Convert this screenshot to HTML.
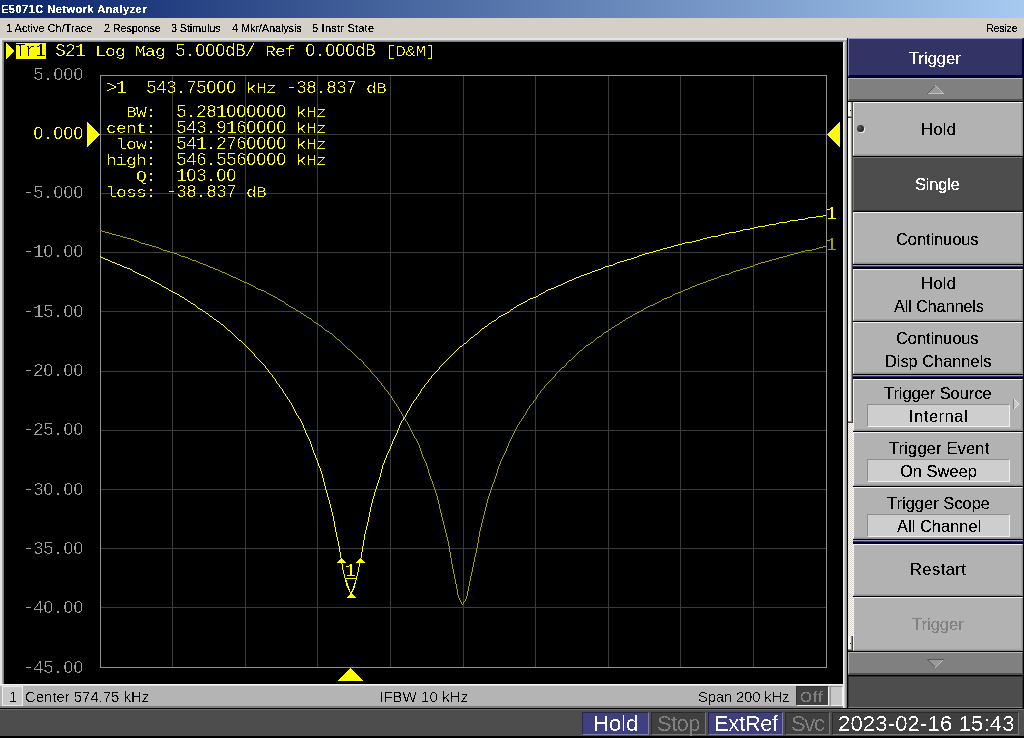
<!DOCTYPE html>
<html lang="en"><head><meta charset="utf-8"><title>E5071C Network Analyzer</title>
<style>
*{box-sizing:border-box;margin:0;padding:0}
html,body{width:1024px;height:738px;overflow:hidden;background:#d4d0c8}
body{position:relative;font-family:"Liberation Sans",sans-serif;font-size:11px;color:#000}
div,span,i,b{position:absolute;display:block;font-style:normal;font-weight:normal}
.u{line-height:28px;white-space:pre;filter:url(#cu)}
.u.s{filter:url(#cs)}
#title{left:0;top:0;width:1024px;height:18px;background:linear-gradient(90deg,#0a246a 0%,#a6caf0 100%)}
#menu{left:0;top:18px;width:1024px;height:20px;background:#d4d0c8}
#frame{left:0;top:38px;width:848px;height:671px;background:#000}
#plot{left:4px;top:42px;width:839px;height:642px;background:#000;overflow:hidden}
.tx{white-space:pre;font-family:"Liberation Mono",monospace;font-size:18px;letter-spacing:-0.8px;line-height:20px;color:#ff0;filter:url(#cm)}
.tx .a{position:static;display:inline-block;transform:scaleY(0.84);transform-origin:0 15px}
.z{width:4px;height:4px;background:#000}
.p{width:2px;height:2px}
#chbar{left:0;top:684px;width:843px;height:24px;background:#b4b4b4}
#status{left:0;top:708px;width:1024px;height:30px;background:#4d4d4d}
#panel{left:848px;top:38px;width:176px;height:670px;background:#000}
.k{background:#b2b2b2;border:1px solid;border-color:#f4f4f4 #8c8c8c #8c8c8c #f4f4f4;box-shadow:inset -1px -1px 0 #a0a0a0}
.k.dk{background:#4d4d4d;border-color:#7a7a7a #303030 #303030 #7a7a7a;box-shadow:none}
.th{left:0;width:5px;background:linear-gradient(90deg,#fff 0,#fff 2px,#ece9d8 2px,#ece9d8 3px);border-right:1px solid #404040;border-bottom:1px solid #404040;box-shadow:inset -1px -1px 0 #909090}
.ck{left:0;width:5px;background-color:#fff;background-image:linear-gradient(45deg,#d4d0c8 25%,transparent 25%,transparent 75%,#d4d0c8 75%),linear-gradient(45deg,#d4d0c8 25%,transparent 25%,transparent 75%,#d4d0c8 75%);background-size:2px 2px;background-position:0 0,1px 1px}
.sep{background:#333366;border-top:1px solid #9999cc;border-bottom:1px solid #000033}
.vb{width:143px;height:23px;background:#cecece;border:1px solid;border-color:#8c8c8c #f0f0f0 #f0f0f0 #8c8c8c}
.dot{width:7px;height:7px;border-radius:50%;background:radial-gradient(circle at 35% 35%,#5a5a5a,#1c1c1c 80%);box-shadow:1px 1px 0 #f0f0f0}
.arr{width:0;height:0;border-left:6px solid #d8d8d8;border-top:6px solid transparent;border-bottom:6px solid transparent}
.sb{top:4px;height:23px;border:1px solid}
.sb.on{background:#404080;border-color:#26264d #8080a8 #8080a8 #26264d}
.sb.off{background:#404040;border-color:#2a2a2a #787878 #787878 #2a2a2a}
</style></head><body>
<svg width="0" height="0" style="position:absolute"><defs>
<filter id="cm" x="-5%" y="-20%" width="110%" height="140%" color-interpolation-filters="sRGB"><feComponentTransfer><feFuncA type="discrete" tableValues="0 0 0 0 0 0 0 1 1 1"/></feComponentTransfer></filter>
<filter id="cu" x="-5%" y="-20%" width="110%" height="140%" color-interpolation-filters="sRGB"><feComponentTransfer><feFuncA type="discrete" tableValues="0 0 1 1 1"/></feComponentTransfer></filter>
<filter id="cs" x="-5%" y="-20%" width="110%" height="140%" color-interpolation-filters="sRGB"><feComponentTransfer><feFuncA type="discrete" tableValues="0 0 0 1 1"/></feComponentTransfer></filter>
</defs></svg>

<div id="title"><span class="u" style="left:1px;top:-5px;font-size:11px;letter-spacing:0.491px;font-weight:bold;color:#fff;">E5071C Network Analyzer</span></div>
<div id="menu"><span class="u" style="left:6px;top:-4px;font-size:11px;letter-spacing:0px;">1 Active Ch/Trace</span><span class="u" style="left:104px;top:-4px;font-size:11px;letter-spacing:-0.2px;">2 Response</span><span class="u" style="left:171px;top:-4px;font-size:11px;letter-spacing:-0.2px;">3 Stimulus</span><span class="u" style="left:232px;top:-4px;font-size:11px;letter-spacing:-0.138px;">4 Mkr/Analysis</span><span class="u" style="left:312px;top:-4px;font-size:11px;letter-spacing:0.225px;">5 Instr State</span><span class="u" style="left:986px;top:-4px;font-size:11px;letter-spacing:-0.36px;">Resize</span></div>
<div id="frame">
 <div style="left:0;top:0;width:848px;height:2px;background:#e4e4e4"></div>
 <div style="left:0;top:0;width:2px;height:671px;background:#e4e4e4"></div>
 <div style="left:2px;top:2px;width:845px;height:1px;background:#a0a0a0"></div>
 <div style="left:2px;top:2px;width:1px;height:668px;background:#a0a0a0"></div>
 <div style="left:3px;top:3px;width:844px;height:1px;background:#808080"></div>
 <div style="left:3px;top:3px;width:1px;height:667px;background:#808080"></div>
 <div style="left:843px;top:4px;width:1px;height:666px;background:#f4f4f4"></div>
 <div style="left:844px;top:3px;width:1px;height:667px;background:#d0d0d0"></div>
 <div style="left:845px;top:2px;width:1px;height:668px;background:#a8a8a8"></div>
 <div style="left:846px;top:2px;width:1px;height:668px;background:#888"></div>
 <div style="left:847px;top:0;width:1px;height:671px;background:#000"></div>
</div>
<div id="plot">
<svg width="839" height="642" viewBox="4 42 839 642" style="position:absolute;left:0;top:0" shape-rendering="crispEdges">
 <g fill="#3c3c3c"><rect x="172" y="75" width="1" height="593"/><rect x="245" y="75" width="1" height="593"/><rect x="317" y="75" width="1" height="593"/><rect x="390" y="75" width="1" height="593"/><rect x="463" y="75" width="1" height="593"/><rect x="535" y="75" width="1" height="593"/><rect x="608" y="75" width="1" height="593"/><rect x="680" y="75" width="1" height="593"/><rect x="753" y="75" width="1" height="593"/><rect x="100" y="134" width="727" height="1"/><rect x="100" y="193" width="727" height="1"/><rect x="100" y="252" width="727" height="1"/><rect x="100" y="311" width="727" height="1"/><rect x="100" y="371" width="727" height="1"/><rect x="100" y="430" width="727" height="1"/><rect x="100" y="489" width="727" height="1"/><rect x="100" y="548" width="727" height="1"/><rect x="100" y="607" width="727" height="1"/></g>
 <rect x="100.5" y="75.5" width="726" height="592" fill="none" stroke="#909090" stroke-width="1"/>
 <path d="M363 362h1v2h-1zM370 370h1v2h-1zM377 378h1v2h-1zM381 383h1v2h-1zM384 387h1v2h-1zM388 392h1v2h-1zM391 396h1v2h-1zM392 398h1v2h-1zM394 401h1v2h-1zM396 404h1v2h-1zM398 407h1v2h-1zM399 409h1v2h-1zM401 412h1v2h-1zM402 414h1v2h-1zM403 416h1v2h-1zM405 419h1v2h-1zM407 422h1v2h-1zM408 424h1v2h-1zM409 426h1v2h-1zM410 428h1v2h-1zM411 430h1v2h-1zM412 432h1v2h-1zM413 434h1v2h-1zM414 436h1v2h-1zM416 439h1v2h-1zM417 441h1v2h-1zM418 443h1v2h-1zM419 445h1v3h-1zM420 448h1v3h-1zM421 451h1v3h-1zM422 454h1v3h-1zM423 457h1v2h-1zM424 459h1v2h-1zM425 461h1v2h-1zM426 463h1v3h-1zM427 466h1v3h-1zM428 469h1v4h-1zM429 473h1v3h-1zM430 476h1v3h-1zM431 479h1v2h-1zM432 481h1v3h-1zM433 484h1v3h-1zM434 487h1v3h-1zM435 490h1v3h-1zM436 493h1v3h-1zM437 496h1v4h-1zM438 500h1v4h-1zM439 504h1v5h-1zM440 509h1v4h-1zM441 513h1v4h-1zM442 517h1v4h-1zM443 521h1v4h-1zM444 525h1v4h-1zM445 529h1v4h-1zM446 533h1v4h-1zM447 537h1v4h-1zM448 541h1v5h-1zM449 546h1v6h-1zM450 552h1v6h-1zM451 558h1v6h-1zM452 564h1v5h-1zM453 569h1v5h-1zM454 574h1v5h-1zM455 579h1v5h-1zM456 584h1v5h-1zM457 589h1v6h-1zM458 595h1v3h-1zM459 598h1v2h-1zM460 600h1v2h-1zM461 602h1v2h-1zM463 602h1v2h-1zM465 599h1v2h-1zM466 596h1v3h-1zM467 591h1v5h-1zM468 586h1v5h-1zM469 581h1v5h-1zM470 576h1v5h-1zM471 572h1v4h-1zM472 567h1v5h-1zM473 562h1v5h-1zM474 557h1v5h-1zM475 553h1v4h-1zM476 548h1v5h-1zM477 543h1v5h-1zM478 537h1v6h-1zM479 531h1v6h-1zM480 527h1v4h-1zM481 523h1v4h-1zM482 519h1v4h-1zM483 515h1v4h-1zM484 511h1v4h-1zM485 507h1v4h-1zM486 503h1v4h-1zM487 499h1v4h-1zM488 496h1v3h-1zM489 493h1v3h-1zM490 490h1v3h-1zM491 487h1v3h-1zM492 484h1v3h-1zM493 482h1v2h-1zM494 479h1v3h-1zM495 476h1v3h-1zM496 473h1v3h-1zM497 469h1v4h-1zM498 466h1v3h-1zM499 464h1v2h-1zM500 461h1v3h-1zM501 459h1v2h-1zM502 457h1v2h-1zM503 455h1v2h-1zM504 453h1v2h-1zM505 451h1v2h-1zM506 448h1v3h-1zM507 446h1v2h-1zM508 443h1v3h-1zM509 441h1v2h-1zM510 439h1v2h-1zM511 437h1v2h-1zM512 435h1v2h-1zM513 433h1v2h-1zM514 431h1v2h-1zM515 429h1v2h-1zM516 427h1v2h-1zM517 425h1v2h-1zM519 422h1v2h-1zM521 419h1v2h-1zM523 416h1v2h-1zM525 413h1v2h-1zM526 411h1v2h-1zM527 409h1v2h-1zM529 406h1v2h-1zM533 401h1v2h-1zM536 397h1v2h-1zM537 395h1v2h-1zM540 391h1v2h-1zM544 386h1v2h-1zM555 374h1v2h-1zM566 363h1v2h-1zM100 230h2v1h-2zM102 231h3v1h-3zM105 232h4v1h-4zM109 233h3v1h-3zM112 234h4v1h-4zM116 235h4v1h-4zM120 236h3v1h-3zM123 237h4v1h-4zM127 238h4v1h-4zM131 239h3v1h-3zM134 240h3v1h-3zM137 241h2v1h-2zM139 242h2v1h-2zM141 243h4v1h-4zM145 244h4v1h-4zM149 245h3v1h-3zM152 246h4v1h-4zM823 246h3v1h-3zM156 247h3v1h-3zM819 247h4v1h-4zM159 248h2v1h-2zM816 248h3v1h-3zM161 249h2v1h-2zM812 249h4v1h-4zM163 250h4v1h-4zM805 250h7v1h-7zM167 251h3v1h-3zM801 251h4v1h-4zM170 252h4v1h-4zM798 252h3v1h-3zM174 253h3v1h-3zM794 253h4v1h-4zM177 254h2v1h-2zM790 254h4v1h-4zM179 255h2v1h-2zM787 255h3v1h-3zM181 256h4v1h-4zM783 256h4v1h-4zM185 257h3v1h-3zM779 257h4v1h-4zM188 258h2v1h-2zM776 258h3v1h-3zM190 259h2v1h-2zM772 259h4v1h-4zM192 260h4v1h-4zM769 260h3v1h-3zM196 261h2v1h-2zM765 261h4v1h-4zM198 262h2v1h-2zM761 262h4v1h-4zM200 263h3v1h-3zM758 263h3v1h-3zM203 264h3v1h-3zM755 264h3v1h-3zM206 265h2v1h-2zM753 265h2v1h-2zM208 266h2v1h-2zM750 266h3v1h-3zM210 267h3v1h-3zM747 267h3v1h-3zM213 268h2v1h-2zM743 268h4v1h-4zM215 269h3v1h-3zM740 269h3v1h-3zM218 270h2v1h-2zM736 270h4v1h-4zM220 271h2v1h-2zM733 271h3v1h-3zM222 272h3v1h-3zM731 272h2v1h-2zM225 273h2v1h-2zM729 273h2v1h-2zM227 274h2v1h-2zM725 274h4v1h-4zM229 275h2v1h-2zM721 275h4v1h-4zM231 276h2v1h-2zM719 276h2v1h-2zM233 277h3v1h-3zM717 277h2v1h-2zM236 278h2v1h-2zM714 278h3v1h-3zM238 279h2v1h-2zM711 279h3v1h-3zM240 280h2v1h-2zM708 280h3v1h-3zM242 281h2v1h-2zM706 281h2v1h-2zM244 282h3v1h-3zM703 282h3v1h-3zM247 283h2v1h-2zM700 283h3v1h-3zM249 284h2v1h-2zM697 284h3v1h-3zM251 285h2v1h-2zM695 285h2v1h-2zM253 286h2v1h-2zM692 286h3v1h-3zM255 287h1v1h-1zM690 287h2v1h-2zM256 288h2v1h-2zM688 288h2v1h-2zM258 289h3v1h-3zM685 289h3v1h-3zM261 290h3v1h-3zM683 290h2v1h-2zM264 291h2v1h-2zM681 291h2v1h-2zM266 292h1v1h-1zM678 292h3v1h-3zM267 293h2v1h-2zM675 293h3v1h-3zM269 294h2v1h-2zM673 294h2v1h-2zM271 295h2v1h-2zM672 295h1v1h-1zM273 296h2v1h-2zM670 296h2v1h-2zM275 297h2v1h-2zM667 297h3v1h-3zM277 298h1v1h-1zM664 298h3v1h-3zM278 299h2v1h-2zM662 299h2v1h-2zM280 300h2v1h-2zM661 300h1v1h-1zM282 301h2v1h-2zM659 301h2v1h-2zM284 302h1v1h-1zM657 302h2v1h-2zM285 303h1v1h-1zM655 303h2v1h-2zM286 304h2v1h-2zM653 304h2v1h-2zM288 305h1v1h-1zM650 305h3v1h-3zM289 306h2v1h-2zM648 306h2v1h-2zM291 307h2v1h-2zM646 307h2v1h-2zM293 308h2v1h-2zM644 308h2v1h-2zM295 309h1v1h-1zM643 309h1v1h-1zM296 310h2v1h-2zM641 310h2v1h-2zM298 311h2v1h-2zM639 311h2v1h-2zM300 312h1v1h-1zM637 312h2v1h-2zM301 313h2v1h-2zM635 313h2v1h-2zM303 314h1v1h-1zM633 314h2v1h-2zM304 315h2v1h-2zM632 315h1v1h-1zM306 316h1v1h-1zM630 316h2v1h-2zM307 317h2v1h-2zM628 317h2v1h-2zM309 318h2v1h-2zM626 318h2v1h-2zM311 319h1v1h-1zM625 319h1v1h-1zM312 320h1v1h-1zM623 320h2v1h-2zM313 321h1v1h-1zM622 321h1v1h-1zM314 322h2v1h-2zM620 322h2v1h-2zM316 323h2v1h-2zM619 323h1v1h-1zM318 324h1v1h-1zM617 324h2v1h-2zM319 325h2v1h-2zM615 325h2v1h-2zM321 326h1v1h-1zM614 326h1v1h-1zM322 327h1v1h-1zM612 327h2v1h-2zM323 328h1v1h-1zM611 328h1v1h-1zM324 329h1v1h-1zM609 329h2v1h-2zM325 330h2v1h-2zM608 330h1v1h-1zM327 331h2v1h-2zM606 331h2v1h-2zM329 332h1v1h-1zM604 332h2v1h-2zM330 333h2v1h-2zM603 333h1v1h-1zM332 334h1v1h-1zM602 334h1v1h-1zM333 335h1v1h-1zM601 335h1v1h-1zM334 336h1v1h-1zM599 336h2v1h-2zM335 337h1v1h-1zM597 337h2v1h-2zM336 338h1v1h-1zM596 338h1v1h-1zM337 339h2v1h-2zM595 339h1v1h-1zM339 340h1v1h-1zM594 340h1v1h-1zM340 341h1v1h-1zM593 341h1v1h-1zM341 342h1v1h-1zM591 342h2v1h-2zM342 343h1v1h-1zM590 343h1v1h-1zM343 344h1v1h-1zM588 344h2v1h-2zM344 345h1v1h-1zM586 345h2v1h-2zM345 346h1v1h-1zM585 346h1v1h-1zM346 347h1v1h-1zM584 347h1v1h-1zM347 348h1v1h-1zM583 348h1v1h-1zM348 349h2v1h-2zM582 349h1v1h-1zM350 350h1v1h-1zM580 350h2v1h-2zM351 351h1v1h-1zM579 351h1v1h-1zM352 352h1v1h-1zM578 352h1v1h-1zM353 353h1v1h-1zM577 353h1v1h-1zM354 354h1v1h-1zM576 354h1v1h-1zM355 355h1v1h-1zM575 355h1v1h-1zM356 356h1v1h-1zM574 356h1v1h-1zM357 357h1v1h-1zM573 357h1v1h-1zM358 358h1v1h-1zM572 358h1v1h-1zM359 359h2v1h-2zM571 359h1v1h-1zM361 360h1v1h-1zM569 360h2v1h-2zM362 361h1v1h-1zM568 361h1v1h-1zM567 362h1v1h-1zM364 364h1v1h-1zM365 365h1v1h-1zM565 365h1v1h-1zM366 366h1v1h-1zM564 366h1v1h-1zM367 367h1v1h-1zM562 367h2v1h-2zM368 368h1v1h-1zM561 368h1v1h-1zM369 369h1v1h-1zM560 369h1v1h-1zM559 370h1v1h-1zM558 371h1v1h-1zM371 372h1v1h-1zM557 372h1v1h-1zM372 373h1v1h-1zM556 373h1v1h-1zM373 374h1v1h-1zM374 375h1v1h-1zM375 376h1v1h-1zM554 376h1v1h-1zM376 377h1v1h-1zM553 377h1v1h-1zM552 378h1v1h-1zM551 379h1v1h-1zM378 380h1v1h-1zM550 380h1v1h-1zM379 381h1v1h-1zM549 381h1v1h-1zM380 382h1v1h-1zM548 382h1v1h-1zM547 383h1v1h-1zM546 384h1v1h-1zM382 385h1v1h-1zM545 385h1v1h-1zM383 386h1v1h-1zM543 388h1v1h-1zM385 389h1v1h-1zM542 389h1v1h-1zM386 390h1v1h-1zM541 390h1v1h-1zM387 391h1v1h-1zM539 393h1v1h-1zM389 394h1v1h-1zM538 394h1v1h-1zM390 395h1v1h-1zM535 399h1v1h-1zM393 400h1v1h-1zM534 400h1v1h-1zM395 403h1v1h-1zM532 403h1v1h-1zM531 404h1v1h-1zM530 405h1v1h-1zM397 406h1v1h-1zM528 408h1v1h-1zM400 411h1v1h-1zM524 415h1v1h-1zM404 418h1v1h-1zM522 418h1v1h-1zM406 421h1v1h-1zM520 421h1v1h-1zM518 424h1v1h-1zM415 438h1v1h-1zM464 601h1v1h-1zM462 604h1v1h-1z" fill="#a0a000"/>
 <path d="M254 354h1v2h-1zM265 366h1v2h-1zM268 370h1v2h-1zM272 375h1v2h-1zM275 379h1v2h-1zM276 381h1v2h-1zM279 385h1v2h-1zM282 389h1v2h-1zM283 391h1v2h-1zM285 394h1v2h-1zM287 397h1v2h-1zM289 400h1v2h-1zM291 403h1v2h-1zM292 405h1v2h-1zM293 407h1v2h-1zM294 409h1v2h-1zM295 411h1v2h-1zM296 413h1v2h-1zM298 416h1v2h-1zM300 419h1v2h-1zM301 421h1v2h-1zM302 423h1v2h-1zM303 425h1v3h-1zM304 428h1v2h-1zM305 430h1v3h-1zM306 433h1v2h-1zM307 435h1v2h-1zM308 437h1v2h-1zM309 439h1v2h-1zM310 441h1v3h-1zM311 444h1v3h-1zM312 447h1v3h-1zM313 450h1v3h-1zM314 453h1v2h-1zM315 455h1v3h-1zM316 458h1v2h-1zM317 460h1v3h-1zM318 463h1v3h-1zM319 466h1v2h-1zM320 468h1v3h-1zM321 471h1v3h-1zM322 474h1v4h-1zM323 478h1v4h-1zM324 482h1v4h-1zM325 486h1v4h-1zM326 490h1v3h-1zM327 493h1v4h-1zM328 497h1v3h-1zM329 500h1v4h-1zM330 504h1v4h-1zM331 508h1v4h-1zM332 512h1v4h-1zM333 516h1v5h-1zM334 521h1v6h-1zM335 527h1v5h-1zM336 532h1v5h-1zM337 537h1v4h-1zM338 541h1v5h-1zM339 546h1v6h-1zM340 552h1v6h-1zM341 558h1v6h-1zM342 564h1v6h-1zM343 570h1v4h-1zM344 574h1v4h-1zM345 578h1v4h-1zM346 582h1v4h-1zM347 586h1v2h-1zM348 588h1v2h-1zM349 590h1v2h-1zM350 592h1v2h-1zM352 590h1v2h-1zM353 588h1v2h-1zM354 584h1v4h-1zM355 580h1v4h-1zM356 576h1v4h-1zM357 572h1v4h-1zM358 567h1v5h-1zM359 563h1v4h-1zM360 558h1v5h-1zM361 552h1v6h-1zM362 546h1v6h-1zM363 540h1v6h-1zM364 534h1v6h-1zM365 530h1v4h-1zM366 526h1v4h-1zM367 522h1v4h-1zM368 517h1v5h-1zM369 512h1v5h-1zM370 507h1v5h-1zM371 503h1v4h-1zM372 499h1v4h-1zM373 496h1v3h-1zM374 492h1v4h-1zM375 489h1v3h-1zM376 486h1v3h-1zM377 483h1v3h-1zM378 480h1v3h-1zM379 477h1v3h-1zM380 473h1v4h-1zM381 469h1v4h-1zM382 465h1v4h-1zM383 463h1v2h-1zM384 460h1v3h-1zM385 458h1v2h-1zM386 455h1v3h-1zM387 453h1v2h-1zM388 451h1v2h-1zM389 449h1v2h-1zM390 446h1v3h-1zM391 444h1v2h-1zM392 441h1v3h-1zM393 439h1v2h-1zM394 437h1v2h-1zM395 435h1v2h-1zM396 433h1v2h-1zM397 430h1v3h-1zM398 428h1v2h-1zM399 425h1v3h-1zM400 423h1v2h-1zM401 421h1v2h-1zM403 418h1v2h-1zM405 415h1v2h-1zM406 413h1v2h-1zM407 411h1v2h-1zM409 408h1v2h-1zM410 406h1v2h-1zM411 404h1v2h-1zM413 401h1v2h-1zM416 397h1v2h-1zM418 394h1v2h-1zM420 391h1v2h-1zM421 389h1v2h-1zM424 385h1v2h-1zM428 380h1v2h-1zM431 376h1v2h-1zM439 367h1v2h-1zM823 215h3v1h-3zM816 216h7v1h-7zM808 217h8v1h-8zM805 218h3v1h-3zM798 219h7v1h-7zM790 220h8v1h-8zM787 221h3v1h-3zM779 222h8v1h-8zM776 223h3v1h-3zM769 224h7v1h-7zM765 225h4v1h-4zM758 226h7v1h-7zM754 227h4v1h-4zM750 228h4v1h-4zM743 229h7v1h-7zM740 230h3v1h-3zM736 231h4v1h-4zM729 232h7v1h-7zM725 233h4v1h-4zM721 234h4v1h-4zM718 235h3v1h-3zM711 236h7v1h-7zM707 237h4v1h-4zM703 238h4v1h-4zM700 239h3v1h-3zM696 240h4v1h-4zM692 241h4v1h-4zM685 242h7v1h-7zM682 243h3v1h-3zM678 244h4v1h-4zM674 245h4v1h-4zM671 246h3v1h-3zM667 247h4v1h-4zM663 248h4v1h-4zM660 249h3v1h-3zM656 250h4v1h-4zM653 251h3v1h-3zM649 252h4v1h-4zM645 253h4v1h-4zM642 254h3v1h-3zM639 255h3v1h-3zM100 256h1v1h-1zM637 256h2v1h-2zM101 257h2v1h-2zM634 257h3v1h-3zM103 258h2v1h-2zM631 258h3v1h-3zM105 259h3v1h-3zM627 259h4v1h-4zM108 260h2v1h-2zM624 260h3v1h-3zM110 261h2v1h-2zM620 261h4v1h-4zM112 262h3v1h-3zM617 262h3v1h-3zM115 263h2v1h-2zM615 263h2v1h-2zM117 264h3v1h-3zM613 264h2v1h-2zM120 265h2v1h-2zM609 265h4v1h-4zM122 266h2v1h-2zM605 266h4v1h-4zM124 267h3v1h-3zM603 267h2v1h-2zM127 268h3v1h-3zM601 268h2v1h-2zM130 269h2v1h-2zM598 269h3v1h-3zM132 270h1v1h-1zM595 270h3v1h-3zM133 271h2v1h-2zM592 271h3v1h-3zM135 272h2v1h-2zM590 272h2v1h-2zM137 273h2v1h-2zM587 273h3v1h-3zM139 274h2v1h-2zM584 274h3v1h-3zM141 275h3v1h-3zM581 275h3v1h-3zM144 276h2v1h-2zM579 276h2v1h-2zM146 277h2v1h-2zM576 277h3v1h-3zM148 278h2v1h-2zM574 278h2v1h-2zM150 279h1v1h-1zM572 279h2v1h-2zM151 280h2v1h-2zM569 280h3v1h-3zM153 281h2v1h-2zM567 281h2v1h-2zM155 282h2v1h-2zM565 282h2v1h-2zM157 283h2v1h-2zM563 283h2v1h-2zM159 284h2v1h-2zM561 284h2v1h-2zM161 285h1v1h-1zM558 285h3v1h-3zM162 286h2v1h-2zM556 286h2v1h-2zM164 287h2v1h-2zM554 287h2v1h-2zM166 288h2v1h-2zM551 288h3v1h-3zM168 289h1v1h-1zM548 289h3v1h-3zM169 290h2v1h-2zM546 290h2v1h-2zM171 291h2v1h-2zM545 291h1v1h-1zM173 292h2v1h-2zM543 292h2v1h-2zM175 293h2v1h-2zM541 293h2v1h-2zM177 294h2v1h-2zM539 294h2v1h-2zM179 295h1v1h-1zM538 295h1v1h-1zM180 296h2v1h-2zM536 296h2v1h-2zM182 297h2v1h-2zM533 297h3v1h-3zM184 298h1v1h-1zM530 298h3v1h-3zM185 299h2v1h-2zM528 299h2v1h-2zM187 300h1v1h-1zM527 300h1v1h-1zM188 301h2v1h-2zM525 301h2v1h-2zM190 302h1v1h-1zM523 302h2v1h-2zM191 303h2v1h-2zM521 303h2v1h-2zM193 304h2v1h-2zM519 304h2v1h-2zM195 305h1v1h-1zM517 305h2v1h-2zM196 306h1v1h-1zM516 306h1v1h-1zM197 307h1v1h-1zM514 307h2v1h-2zM198 308h2v1h-2zM513 308h1v1h-1zM200 309h2v1h-2zM511 309h2v1h-2zM202 310h1v1h-1zM510 310h1v1h-1zM203 311h2v1h-2zM509 311h1v1h-1zM205 312h1v1h-1zM507 312h2v1h-2zM206 313h2v1h-2zM505 313h2v1h-2zM208 314h1v1h-1zM503 314h2v1h-2zM209 315h1v1h-1zM501 315h2v1h-2zM210 316h2v1h-2zM499 316h2v1h-2zM212 317h1v1h-1zM498 317h1v1h-1zM213 318h1v1h-1zM497 318h1v1h-1zM214 319h2v1h-2zM496 319h1v1h-1zM216 320h1v1h-1zM494 320h2v1h-2zM217 321h2v1h-2zM492 321h2v1h-2zM219 322h1v1h-1zM491 322h1v1h-1zM220 323h1v1h-1zM489 323h2v1h-2zM221 324h2v1h-2zM488 324h1v1h-1zM223 325h1v1h-1zM487 325h1v1h-1zM224 326h1v1h-1zM485 326h2v1h-2zM225 327h1v1h-1zM484 327h1v1h-1zM226 328h1v1h-1zM482 328h2v1h-2zM227 329h1v1h-1zM481 329h1v1h-1zM228 330h2v1h-2zM480 330h1v1h-1zM230 331h1v1h-1zM479 331h1v1h-1zM231 332h1v1h-1zM478 332h1v1h-1zM232 333h1v1h-1zM477 333h1v1h-1zM233 334h1v1h-1zM475 334h2v1h-2zM234 335h1v1h-1zM474 335h1v1h-1zM235 336h1v1h-1zM473 336h1v1h-1zM236 337h1v1h-1zM471 337h2v1h-2zM237 338h1v1h-1zM470 338h1v1h-1zM238 339h1v1h-1zM469 339h1v1h-1zM239 340h2v1h-2zM468 340h1v1h-1zM241 341h1v1h-1zM467 341h1v1h-1zM242 342h1v1h-1zM466 342h1v1h-1zM243 343h1v1h-1zM464 343h2v1h-2zM244 344h1v1h-1zM463 344h1v1h-1zM245 345h1v1h-1zM462 345h1v1h-1zM246 346h1v1h-1zM460 346h2v1h-2zM247 347h1v1h-1zM459 347h1v1h-1zM248 348h1v1h-1zM458 348h1v1h-1zM249 349h1v1h-1zM457 349h1v1h-1zM250 350h1v1h-1zM456 350h1v1h-1zM251 351h1v1h-1zM455 351h1v1h-1zM252 352h1v1h-1zM454 352h1v1h-1zM253 353h1v1h-1zM453 353h1v1h-1zM452 354h1v1h-1zM451 355h1v1h-1zM255 356h1v1h-1zM450 356h1v1h-1zM256 357h1v1h-1zM449 357h1v1h-1zM257 358h1v1h-1zM448 358h1v1h-1zM258 359h1v1h-1zM447 359h1v1h-1zM259 360h1v1h-1zM446 360h1v1h-1zM260 361h1v1h-1zM445 361h1v1h-1zM261 362h1v1h-1zM444 362h1v1h-1zM262 363h1v1h-1zM443 363h1v1h-1zM263 364h1v1h-1zM442 364h1v1h-1zM264 365h1v1h-1zM441 365h1v1h-1zM440 366h1v1h-1zM266 368h1v1h-1zM267 369h1v1h-1zM438 369h1v1h-1zM437 370h1v1h-1zM436 371h1v1h-1zM269 372h1v1h-1zM435 372h1v1h-1zM270 373h1v1h-1zM434 373h1v1h-1zM271 374h1v1h-1zM433 374h1v1h-1zM432 375h1v1h-1zM273 377h1v1h-1zM274 378h1v1h-1zM430 378h1v1h-1zM429 379h1v1h-1zM427 382h1v1h-1zM277 383h1v1h-1zM426 383h1v1h-1zM278 384h1v1h-1zM425 384h1v1h-1zM280 387h1v1h-1zM423 387h1v1h-1zM281 388h1v1h-1zM422 388h1v1h-1zM284 393h1v1h-1zM419 393h1v1h-1zM286 396h1v1h-1zM417 396h1v1h-1zM288 399h1v1h-1zM415 399h1v1h-1zM414 400h1v1h-1zM290 402h1v1h-1zM412 403h1v1h-1zM408 410h1v1h-1zM297 415h1v1h-1zM404 417h1v1h-1zM299 418h1v1h-1zM402 420h1v1h-1zM351 592h1v1h-1z" fill="#ffff00"/>
 <g fill="#ffff00">
  <polygon points="6,43 6,59 14,51"/>
  <polygon points="87,122 87,147 100,134.5"/>
  <polygon points="840,122 840,147 827,134.5"/>
  <path d="M341 558h1v1h-1zM340 559h3v1h-3zM339 560h5v1h-5zM338 561h7v1h-7zM337 562h9v1h-9zM360 558h1v1h-1zM359 559h3v1h-3zM358 560h5v1h-5zM357 561h7v1h-7zM356 562h9v1h-9zM351 593h1v1h-1zM350 594h3v1h-3zM349 595h5v1h-5zM348 596h7v1h-7zM347 597h9v1h-9z"/>
  <polygon points="350.5,667.5 337.5,681 363.5,681"/>
 </g>
 <polygon points="345.5,578.5 356.5,578.5 351,594.5" fill="none" stroke="#ffff00" stroke-width="1"/>
</svg>
<div style="left:12px;top:1px;width:30px;height:16px;background:#ff0"></div>
<div class="tx" style="left:11px;top:-1px;color:#000;">Tr1</div>
<div class="tx" style="left:51px;top:-1px;">S21 <span class="a">Log</span> <span class="a">Mag</span> 5.000dB/ <span class="a">Ref</span> 0.000dB <span class="a">[D&amp;M]</span></div><i class="z" style="left:185px;top:10px;width:3px;height:4px"></i><i class="p" style="left:185px;top:12px;background:#ff0"></i><i class="z" style="left:194px;top:6px;width:4px;height:4px"></i><i class="z" style="left:204px;top:6px;width:4px;height:4px"></i><i class="z" style="left:214px;top:6px;width:4px;height:4px"></i><i class="z" style="left:304px;top:6px;width:4px;height:4px"></i><i class="z" style="left:315px;top:10px;width:3px;height:4px"></i><i class="p" style="left:315px;top:12px;background:#ff0"></i><i class="z" style="left:324px;top:6px;width:4px;height:4px"></i><i class="z" style="left:334px;top:6px;width:4px;height:4px"></i><i class="z" style="left:344px;top:6px;width:4px;height:4px"></i>
<div class="tx" style="left:29px;top:23px;color:#a0a0a0;">5.000</div><i class="z" style="left:43px;top:34px;width:3px;height:4px"></i><i class="p" style="left:43px;top:36px;background:#a0a0a0"></i><i class="z" style="left:52px;top:30px;width:4px;height:4px"></i><i class="z" style="left:62px;top:30px;width:4px;height:4px"></i><i class="z" style="left:72px;top:30px;width:4px;height:4px"></i><div class="tx" style="left:29px;top:82px;color:#ff0;">0.000</div><i class="z" style="left:32px;top:89px;width:4px;height:4px"></i><i class="z" style="left:43px;top:93px;width:3px;height:4px"></i><i class="p" style="left:43px;top:95px;background:#ff0"></i><i class="z" style="left:52px;top:89px;width:4px;height:4px"></i><i class="z" style="left:62px;top:89px;width:4px;height:4px"></i><i class="z" style="left:72px;top:89px;width:4px;height:4px"></i><div class="tx" style="left:19px;top:141px;color:#a0a0a0;">-5.000</div><i class="z" style="left:43px;top:152px;width:3px;height:4px"></i><i class="p" style="left:43px;top:154px;background:#a0a0a0"></i><i class="z" style="left:52px;top:148px;width:4px;height:4px"></i><i class="z" style="left:62px;top:148px;width:4px;height:4px"></i><i class="z" style="left:72px;top:148px;width:4px;height:4px"></i><div class="tx" style="left:19px;top:200px;color:#a0a0a0;">-10.00</div><i class="z" style="left:42px;top:207px;width:4px;height:4px"></i><i class="z" style="left:53px;top:211px;width:3px;height:4px"></i><i class="p" style="left:53px;top:213px;background:#a0a0a0"></i><i class="z" style="left:62px;top:207px;width:4px;height:4px"></i><i class="z" style="left:72px;top:207px;width:4px;height:4px"></i><div class="tx" style="left:19px;top:260px;color:#a0a0a0;">-15.00</div><i class="z" style="left:53px;top:271px;width:3px;height:4px"></i><i class="p" style="left:53px;top:273px;background:#a0a0a0"></i><i class="z" style="left:62px;top:267px;width:4px;height:4px"></i><i class="z" style="left:72px;top:267px;width:4px;height:4px"></i><div class="tx" style="left:19px;top:319px;color:#a0a0a0;">-20.00</div><i class="z" style="left:42px;top:326px;width:4px;height:4px"></i><i class="z" style="left:53px;top:330px;width:3px;height:4px"></i><i class="p" style="left:53px;top:332px;background:#a0a0a0"></i><i class="z" style="left:62px;top:326px;width:4px;height:4px"></i><i class="z" style="left:72px;top:326px;width:4px;height:4px"></i><div class="tx" style="left:19px;top:378px;color:#a0a0a0;">-25.00</div><i class="z" style="left:53px;top:389px;width:3px;height:4px"></i><i class="p" style="left:53px;top:391px;background:#a0a0a0"></i><i class="z" style="left:62px;top:385px;width:4px;height:4px"></i><i class="z" style="left:72px;top:385px;width:4px;height:4px"></i><div class="tx" style="left:19px;top:438px;color:#a0a0a0;">-30.00</div><i class="z" style="left:42px;top:445px;width:4px;height:4px"></i><i class="z" style="left:53px;top:449px;width:3px;height:4px"></i><i class="p" style="left:53px;top:451px;background:#a0a0a0"></i><i class="z" style="left:62px;top:445px;width:4px;height:4px"></i><i class="z" style="left:72px;top:445px;width:4px;height:4px"></i><div class="tx" style="left:19px;top:497px;color:#a0a0a0;">-35.00</div><i class="z" style="left:53px;top:508px;width:3px;height:4px"></i><i class="p" style="left:53px;top:510px;background:#a0a0a0"></i><i class="z" style="left:62px;top:504px;width:4px;height:4px"></i><i class="z" style="left:72px;top:504px;width:4px;height:4px"></i><div class="tx" style="left:19px;top:556px;color:#a0a0a0;">-40.00</div><i class="z" style="left:42px;top:563px;width:4px;height:4px"></i><i class="z" style="left:53px;top:567px;width:3px;height:4px"></i><i class="p" style="left:53px;top:569px;background:#a0a0a0"></i><i class="z" style="left:62px;top:563px;width:4px;height:4px"></i><i class="z" style="left:72px;top:563px;width:4px;height:4px"></i><div class="tx" style="left:19px;top:616px;color:#a0a0a0;">-45.00</div><i class="z" style="left:53px;top:627px;width:3px;height:4px"></i><i class="p" style="left:53px;top:629px;background:#a0a0a0"></i><i class="z" style="left:62px;top:623px;width:4px;height:4px"></i><i class="z" style="left:72px;top:623px;width:4px;height:4px"></i>
<div class="tx" style="left:102px;top:36px;">&gt;1  543.75000 <span class="a">kHz</span> -38.837 <span class="a">dB</span></div><i class="z" style="left:176px;top:47px;width:3px;height:4px"></i><i class="p" style="left:176px;top:49px;background:#ff0"></i><i class="z" style="left:205px;top:43px;width:4px;height:4px"></i><i class="z" style="left:215px;top:43px;width:4px;height:4px"></i><i class="z" style="left:225px;top:43px;width:4px;height:4px"></i><i class="z" style="left:316px;top:47px;width:3px;height:4px"></i><i class="p" style="left:316px;top:49px;background:#ff0"></i><div class="tx" style="left:102px;top:60px;">  <span class="a">BW:</span>  5.281000000 <span class="a">kHz</span></div><i class="z" style="left:146px;top:66px;width:3px;height:9px"></i><i class="p" style="left:146px;top:67px;background:#ff0"></i><i class="p" style="left:146px;top:73px;background:#ff0"></i><i class="z" style="left:186px;top:71px;width:3px;height:4px"></i><i class="p" style="left:186px;top:73px;background:#ff0"></i><i class="z" style="left:225px;top:67px;width:4px;height:4px"></i><i class="z" style="left:235px;top:67px;width:4px;height:4px"></i><i class="z" style="left:245px;top:67px;width:4px;height:4px"></i><i class="z" style="left:255px;top:67px;width:4px;height:4px"></i><i class="z" style="left:265px;top:67px;width:4px;height:4px"></i><i class="z" style="left:275px;top:67px;width:4px;height:4px"></i><div class="tx" style="left:102px;top:76px;"><span class="a">cent:</span>  543.9160000 <span class="a">kHz</span></div><i class="z" style="left:146px;top:82px;width:3px;height:9px"></i><i class="p" style="left:146px;top:83px;background:#ff0"></i><i class="p" style="left:146px;top:89px;background:#ff0"></i><i class="z" style="left:206px;top:87px;width:3px;height:4px"></i><i class="p" style="left:206px;top:89px;background:#ff0"></i><i class="z" style="left:245px;top:83px;width:4px;height:4px"></i><i class="z" style="left:255px;top:83px;width:4px;height:4px"></i><i class="z" style="left:265px;top:83px;width:4px;height:4px"></i><i class="z" style="left:275px;top:83px;width:4px;height:4px"></i><div class="tx" style="left:102px;top:92px;"> <span class="a">low:</span>  541.2760000 <span class="a">kHz</span></div><i class="z" style="left:146px;top:98px;width:3px;height:9px"></i><i class="p" style="left:146px;top:99px;background:#ff0"></i><i class="p" style="left:146px;top:105px;background:#ff0"></i><i class="z" style="left:206px;top:103px;width:3px;height:4px"></i><i class="p" style="left:206px;top:105px;background:#ff0"></i><i class="z" style="left:245px;top:99px;width:4px;height:4px"></i><i class="z" style="left:255px;top:99px;width:4px;height:4px"></i><i class="z" style="left:265px;top:99px;width:4px;height:4px"></i><i class="z" style="left:275px;top:99px;width:4px;height:4px"></i><div class="tx" style="left:102px;top:108px;"><span class="a">high:</span>  546.5560000 <span class="a">kHz</span></div><i class="z" style="left:146px;top:114px;width:3px;height:9px"></i><i class="p" style="left:146px;top:115px;background:#ff0"></i><i class="p" style="left:146px;top:121px;background:#ff0"></i><i class="z" style="left:206px;top:119px;width:3px;height:4px"></i><i class="p" style="left:206px;top:121px;background:#ff0"></i><i class="z" style="left:245px;top:115px;width:4px;height:4px"></i><i class="z" style="left:255px;top:115px;width:4px;height:4px"></i><i class="z" style="left:265px;top:115px;width:4px;height:4px"></i><i class="z" style="left:275px;top:115px;width:4px;height:4px"></i><div class="tx" style="left:102px;top:124px;">   <span class="a">Q:</span>  103.00</div><i class="z" style="left:146px;top:130px;width:3px;height:9px"></i><i class="p" style="left:146px;top:131px;background:#ff0"></i><i class="p" style="left:146px;top:137px;background:#ff0"></i><i class="z" style="left:185px;top:131px;width:4px;height:4px"></i><i class="z" style="left:206px;top:135px;width:3px;height:4px"></i><i class="p" style="left:206px;top:137px;background:#ff0"></i><i class="z" style="left:215px;top:131px;width:4px;height:4px"></i><i class="z" style="left:225px;top:131px;width:4px;height:4px"></i><div class="tx" style="left:102px;top:140px;"><span class="a">loss:</span> -38.837 <span class="a">dB</span></div><i class="z" style="left:146px;top:146px;width:3px;height:5px"></i><i class="z" style="left:146px;top:152px;width:3px;height:3px"></i><i class="p" style="left:146px;top:147px;background:#ff0"></i><i class="p" style="left:146px;top:153px;background:#ff0"></i><i class="z" style="left:196px;top:152px;width:3px;height:3px"></i><i class="p" style="left:196px;top:153px;background:#ff0"></i>
<div class="tx" style="left:822px;top:162px;">1</div>
<div class="tx" style="left:822px;top:193px;color:#a0a000;">1</div>
<div class="tx" style="left:341px;top:519px;">1</div>
</div>
<div id="chbar">
 <div style="left:0;top:0;width:843px;height:1px;background:#f4f4f4"></div>
 <div style="left:0;top:1px;width:843px;height:1px;background:#dcdcdc"></div>
 <div style="left:0;top:22px;width:843px;height:2px;background:#808080"></div>
 <div style="left:2px;top:2px;width:21px;height:20px;background:#c8c8c8;border:1px solid #ececec"></div>
 <span class="u s" style="left:9px;top:-1px;font-size:15px;letter-spacing:0px;">1</span><span class="u s" style="left:25px;top:-1px;font-size:15px;letter-spacing:-0.056px;">Center 574.75 kHz</span><span class="u s" style="left:379px;top:-1px;font-size:15px;letter-spacing:0.09px;">IFBW 10 kHz</span><span class="u s" style="left:698px;top:-1px;font-size:15px;letter-spacing:-0.245px;">Span 200 kHz</span>
 <div style="left:796px;top:2px;width:33px;height:20px;background:#404040;border:1px solid;border-color:#303030 #f0f0f0 #f0f0f0 #303030"></div>
 <span class="u" style="left:800px;top:-1px;font-size:15px;letter-spacing:1.35px;color:#808080;">Off</span>
 <div style="left:830px;top:2px;width:13px;height:20px;background:#c8c8c8;border:1px solid;border-color:#909090 #f0f0f0 #f0f0f0 #909090"></div>
</div>
<div id="panel">
 <div style="left:0;top:0;width:175px;height:39px;background:#333366;border:1px solid;border-color:#9494c8 #000033 #000033 #9494c8;border-bottom-width:2px"></div>
 <span class="u" style="left:61px;top:6px;font-size:16.5px;letter-spacing:0px;color:#fff;">Trigger</span>
 <div style="left:0;top:40px;width:175px;height:23px;background:#808080;border:1px solid;border-color:#b8b8b8 #505050 #505050 #b8b8b8;border-bottom-width:2px"></div>
 <svg width="17" height="9" viewBox="0 0 17 9" shape-rendering="crispEdges" style="position:absolute;left:79px;top:47px"><path d="M8 1h1v1h-1zM7 2h3v1h-3zM6 3h5v1h-5zM5 4h7v1h-7zM4 5h9v1h-9zM3 6h11v1h-11zM2 7h13v1h-13z" fill="#989898"/><path d="M7 1h1v1h-1zM6 2h1v1h-1zM5 3h1v1h-1zM4 4h1v1h-1zM3 5h1v1h-1zM2 6h1v1h-1zM1 7h1v1h-1zM0 8h1v1h-1z" fill="#585858"/><path d="M8 0h1v1h-1zM9 1h1v1h-1zM10 2h1v1h-1zM11 3h1v1h-1zM12 4h1v1h-1zM13 5h1v1h-1zM14 6h1v1h-1zM15 7h1v1h-1zM1 8h16v1h-16z" fill="#c0c0c0"/></svg>
 <div class="th" style="top:64px;height:16px"><i style="left:2px;top:8px;width:1px;height:1px;background:#000"></i></div>
 <div class="th" style="top:80px;height:305px"></div>
 <div class="ck" style="top:385px;height:213px"></div>
 <div class="th" style="top:598px;height:15px"><i style="left:2px;top:7px;width:1px;height:1px;background:#000"></i></div>
 <div class="k" style="left:5px;top:64px;width:170px;height:54px;"><i class="dot" style="left:3px;top:22px"></i><span class="u" style="left:67px;top:12px;font-size:16.5px;letter-spacing:0.3px;">Hold</span></div><div class="k dk" style="left:5px;top:119px;width:170px;height:54px;"><span class="u" style="left:61px;top:12px;font-size:16.5px;letter-spacing:-0.18px;color:#fff;">Single</span></div><div class="k" style="left:5px;top:174px;width:170px;height:52px;"><span class="u" style="left:42px;top:12px;font-size:16.5px;letter-spacing:-0.1px;">Continuous</span></div><div class="sep" style="left:5px;top:227px;width:170px;height:3px;"></div><div class="k" style="left:5px;top:231px;width:170px;height:52px;"><span class="u" style="left:67px;top:-1px;font-size:16.5px;letter-spacing:0.3px;">Hold</span><span class="u" style="left:40px;top:22px;font-size:16.5px;letter-spacing:-0.245px;">All Channels</span></div><div class="k" style="left:5px;top:284px;width:170px;height:52px;"><span class="u" style="left:42px;top:1px;font-size:16.5px;letter-spacing:-0.1px;">Continuous</span><span class="u" style="left:31px;top:24px;font-size:16.5px;letter-spacing:-0.075px;">Disp Channels</span></div><div class="sep" style="left:5px;top:337px;width:170px;height:3px;"></div><div class="k" style="left:5px;top:341px;width:170px;height:52px;"><i class="vb" style="left:13px;top:24px"></i><svg width="6" height="10" viewBox="0 0 6 10" shape-rendering="crispEdges" style="position:absolute;left:159px;top:19px"><path d="M0 0h1v10h-1z" fill="#808080"/><path d="M1 1h1v1h-1zM1 2h2v1h-2zM1 3h3v1h-3zM1 4h4v1h-4zM1 5h4v1h-4zM1 6h3v1h-3zM1 7h2v1h-2zM1 8h1v1h-1z" fill="#c8c8c8"/><path d="M1 0h1v1h-1zM2 1h1v1h-1zM3 2h1v1h-1zM4 3h1v1h-1zM5 4h1v1h-1zM5 5h1v1h-1zM4 6h1v1h-1zM3 7h1v1h-1zM2 8h1v1h-1zM1 9h1v1h-1z" fill="#e4e4e4"/></svg><span class="u" style="left:30px;top:-1px;font-size:16.5px;letter-spacing:-0.069px;">Trigger Source</span><span class="u" style="left:55px;top:22px;font-size:16.5px;letter-spacing:0.514px;">Internal</span></div><div class="k" style="left:5px;top:394px;width:170px;height:54px;"><i class="vb" style="left:13px;top:26px"></i><span class="u" style="left:35px;top:1px;font-size:16.5px;letter-spacing:0.15px;">Trigger Event</span><span class="u" style="left:46px;top:24px;font-size:16.5px;letter-spacing:0px;">On Sweep</span></div><div class="k" style="left:5px;top:449px;width:170px;height:52px;"><i class="vb" style="left:13px;top:26px"></i><span class="u" style="left:33px;top:1px;font-size:16.5px;letter-spacing:0px;">Trigger Scope</span><span class="u" style="left:43px;top:24px;font-size:16.5px;letter-spacing:0px;">All Channel</span></div><div class="sep" style="left:5px;top:502px;width:170px;height:3px;"></div><div class="k" style="left:5px;top:506px;width:170px;height:52px;"><span class="u" style="left:56px;top:10px;font-size:16.5px;letter-spacing:0.45px;">Restart</span></div><div class="k" style="left:5px;top:559px;width:170px;height:54px;"><span class="u" style="left:58px;top:12px;font-size:16.5px;letter-spacing:0px;color:#808080;">Trigger</span></div>
 <div style="left:0;top:614px;width:175px;height:23px;background:#808080;border:1px solid;border-color:#b8b8b8 #505050 #505050 #b8b8b8;border-bottom-width:2px"></div>
 <svg width="17" height="9" viewBox="0 0 17 9" shape-rendering="crispEdges" style="position:absolute;left:79px;top:621px"><path d="M2 1h13v1h-13zM3 2h11v1h-11zM4 3h9v1h-9zM5 4h7v1h-7zM6 5h5v1h-5zM7 6h3v1h-3zM8 7h1v1h-1z" fill="#989898"/><path d="M0 0h17v1h-17zM1 1h1v1h-1zM2 2h1v1h-1zM3 3h1v1h-1zM4 4h1v1h-1zM5 5h1v1h-1zM6 6h1v1h-1zM7 7h1v1h-1z" fill="#585858"/><path d="M15 1h1v1h-1zM14 2h1v1h-1zM13 3h1v1h-1zM12 4h1v1h-1zM11 5h1v1h-1zM10 6h1v1h-1zM9 7h1v1h-1zM8 8h1v1h-1z" fill="#c0c0c0"/></svg>
 <div style="left:0;top:638px;width:175px;height:32px;background:#4d4d4d;border:1px solid;border-color:#303030 #303030 #808080 #303030"></div>
</div>
<div id="status">
 <div style="left:0;top:0;width:1024px;height:1px;background:#000"></div>
 <div style="left:0;top:1px;width:1024px;height:1px;background:#707070"></div>
 <div style="left:0;top:28px;width:1024px;height:2px;background:#000"></div>
 <div class="sb on" style="left:582px;width:67px"><span class="u s" style="left:10px;top:-3px;font-size:22px;letter-spacing:0px;color:#fff;">Hold</span></div><div class="sb off" style="left:651px;width:55px"><span class="u s" style="left:5px;top:-3px;font-size:22px;letter-spacing:-0.6px;color:#808080;">Stop</span></div><div class="sb on" style="left:708px;width:75px"><span class="u s" style="left:5px;top:-3px;font-size:22px;letter-spacing:-0.36px;color:#fff;">ExtRef</span></div><div class="sb off" style="left:785px;width:45px"><span class="u s" style="left:5px;top:-3px;font-size:22px;letter-spacing:-1.35px;color:#808080;">Svc</span></div><div class="sb off" style="left:832px;width:187px"><span class="u s" style="left:5px;top:-3px;font-size:22px;letter-spacing:0.18px;color:#fff;">2023-02-16 15:43</span></div>
</div>
</body></html>
